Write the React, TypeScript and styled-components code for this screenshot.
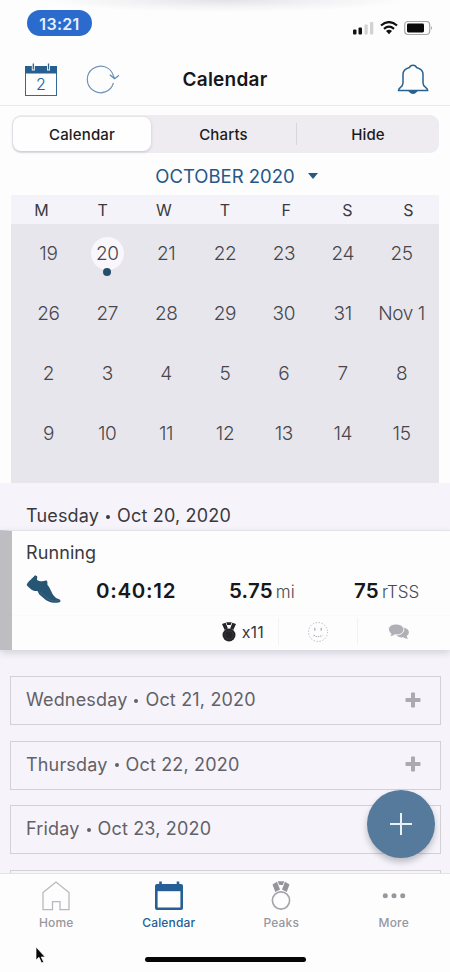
import React from "react";
import styled, { createGlobalStyle } from "styled-components";

const Global = createGlobalStyle`
  * { box-sizing: border-box; }
  body { margin: 0; background: #fdfdfd; overflow: hidden; }
  svg { display: block; flex: none; }
`;

const Screen = styled.div`
  position: relative;
  width: 450px;
  height: 972px;
  display: flex;
  flex-direction: column;
  overflow: hidden;
  background: #fdfdfd;
  color: #2c2b31;
  font-family: Inter, "Liberation Sans", sans-serif;
`;

const StatusBar = styled.header`
  height: 54px;
  flex: none;
  display: flex;
  justify-content: space-between;
  padding: 10px 17px 0 27px;
  background: radial-gradient(ellipse 180px 12px at 50% 0, #e4e2e6 0%, #f4f3f5 60%, #fdfdfd 100%);
`;
const TimePill = styled.div`
  width: 65px;
  height: 26px;
  border-radius: 13px;
  background: #2b6bce;
  color: #e6effc;
  font-size: 16px;
  font-weight: 600;
  letter-spacing: 0.3px;
  line-height: 28px;
  text-align: center;
`;
const StatusIcons = styled.div`
  display: flex;
  gap: 6px;
  padding-top: 11px;
`;

const NavBar = styled.nav`
  height: 52px;
  flex: none;
  display: grid;
  grid-template-columns: 150px 1fr 150px;
  align-items: center;
  border-bottom: 1px solid #ebe8f0;
`;
const NavSide = styled.div<{ $end?: boolean }>`
  display: flex;
  justify-content: ${(p) => (p.$end ? "flex-end" : "flex-start")};
  gap: 27px;
  padding: 0 ${(p) => (p.$end ? "21px" : "0")} 0 ${(p) => (p.$end ? "0" : "24px")};
`;
const Title = styled.h1`
  margin: 0;
  text-align: center;
  color: #17161a;
  font-size: 19px;
  font-weight: 600;
  line-height: 24px;
  letter-spacing: 0.25px;
  white-space: nowrap;
`;

const Segmented = styled.div`
  height: 38px;
  flex: none;
  display: grid;
  grid-template-columns: 138px 145px 1fr;
  align-items: center;
  margin: 9px 11px 0 12px;
  padding: 2px 0 2px 1px;
  border-radius: 9px;
  background: #eeecf0;
`;
const Segment = styled.button<{ $active?: boolean; $divided?: boolean }>`
  height: ${(p) => (p.$active ? "34px" : "22px")};
  padding: 2px 0 0;
  border: 0;
  border-left: ${(p) => (p.$divided ? "1px solid #d8d6dc" : "0")};
  border-radius: ${(p) => (p.$active ? "8px" : "0")};
  background: ${(p) => (p.$active ? "#fefefe" : "transparent")};
  box-shadow: ${(p) => (p.$active ? "0 1px 3px rgba(55, 45, 80, 0.22)" : "none")};
  color: #1c1b20;
  font: 500 15px / 20px Inter, sans-serif;
  letter-spacing: 0.15px;
`;

const MonthRow = styled.div`
  height: 42px;
  flex: none;
  display: flex;
  align-items: center;
  justify-content: center;
  gap: 13px;
  padding: 3px 0 0 23px;
  color: #265887;
  font-size: 18.5px;
`;
const Caret = styled.i`
  border: 5px solid transparent;
  border-top: 6px solid #265887;
  border-bottom: 0;
`;

const Weekdays = styled.div`
  height: 29px;
  flex: none;
  display: grid;
  grid-template-columns: repeat(7, 1fr);
  align-items: center;
  margin: 0 11px;
  background: #f5f3fa;
  color: #3b3a40;
  font-size: 16px;
  text-align: center;
`;
const MonthGrid = styled.div`
  height: 259px;
  flex: none;
  display: grid;
  grid-template-columns: repeat(7, 1fr);
  grid-template-rows: repeat(4, 60px);
  margin: 0 11px;
  padding: 0 8px;
  background: #e7e6ec;
`;
const DayCell = styled.div`
  display: flex;
  flex-direction: column;
  align-items: center;
  padding-top: 13px;
`;
const DayNumber = styled.span<{ $selected?: boolean }>`
  min-width: 33px;
  height: 33px;
  border-radius: 17px;
  background: ${(p) => (p.$selected ? "#f9f7fc" : "transparent")};
  color: #47464d;
  font-size: 19px;
  font-weight: 300;
  line-height: 34px;
  letter-spacing: -0.4px;
  text-align: center;
  white-space: nowrap;
`;
const EventDot = styled.i`
  width: 8px;
  height: 8px;
  margin-top: -2px;
  border-radius: 50%;
  background: #244f6b;
`;

const Agenda = styled.main`
  flex: 1;
  min-height: 0;
  overflow: hidden;
  background: #f6f4fa;
`;
const DateHeading = styled.h2`
  height: 47px;
  margin: 0;
  padding: 20px 26px 0;
  color: #3a393f;
  font-size: 18px;
  font-weight: 400;
  line-height: 26px;
`;
const DateText = styled.span`
  display: flex;
  align-items: center;
  letter-spacing: 0.17px;
  white-space: nowrap;
`;
const Bullet = styled.i`
  width: 4px;
  height: 4px;
  margin: 2px 7px 0;
  border-radius: 50%;
  background: currentColor;
`;
const Workout = styled.article`
  height: 120px;
  border-top: 1px solid #e5e2e9;
  border-left: 12px solid #bebdc1;
  background: #fdfdfd;
  box-shadow: 0 3px 7px rgba(45, 40, 60, 0.17);
`;
const WorkoutName = styled.h3`
  height: 42px;
  margin: 0;
  padding: 9px 14px 0;
  color: #3a393f;
  font-size: 18px;
  font-weight: 400;
  line-height: 25px;
  letter-spacing: 0.1px;
`;
const Metrics = styled.div`
  height: 42px;
  display: grid;
  grid-template-columns: 70px 133px 125px 1fr;
  align-items: start;
  padding-left: 14px;
`;
const MetricIcon = styled.div`
  padding-top: 2px;
`;
const Metric = styled.div<{ $wide?: boolean }>`
  color: #18171b;
  font-size: 20.5px;
  font-weight: 600;
  line-height: 36px;
  letter-spacing: ${(p) => (p.$wide ? "0.7px" : "0.2px")};
  white-space: nowrap;
`;
const Unit = styled.small`
  margin-left: 3px;
  color: #4b4950;
  font-size: 17px;
  font-weight: 300;
  letter-spacing: 0;
`;
const WorkoutFooter = styled.div`
  height: 32px;
  display: grid;
  grid-template-columns: 267px 79px 81px;
  align-items: center;
  border-top: 1px solid #fbf9fb;
`;
const FooterCell = styled.div<{ $end?: boolean; $divided?: boolean }>`
  height: 27px;
  display: flex;
  align-items: center;
  justify-content: ${(p) => (p.$end ? "flex-end" : "center")};
  gap: 6px;
  padding-right: ${(p) => (p.$end ? "14px" : "0")};
  border-right: ${(p) => (p.$divided ? "1px solid #f4f0f6" : "0")};
  color: #39383e;
  font-size: 16px;
  letter-spacing: 0.2px;
`;

const DayList = styled.div`
  display: flex;
  flex-direction: column;
  gap: 15.5px;
  padding: 26px 9px 0 10px;
`;
const EmptyDay = styled.section`
  height: 49px;
  flex: none;
  display: flex;
  align-items: center;
  justify-content: space-between;
  padding: 0 19px 2px 15px;
  border: 1px solid #d3d1d5;
  color: #626168;
  font-size: 18px;
`;

const TabBar = styled.nav`
  height: 99px;
  flex: none;
  display: grid;
  grid-template-columns: repeat(4, 1fr);
  padding-top: 6px;
  border-top: 1px solid #e4e1e8;
  background: #fdfdfd;
`;
const Tab = styled.div<{ $active?: boolean }>`
  display: flex;
  flex-direction: column;
  align-items: center;
  gap: 3px;
  color: ${(p) => (p.$active ? "#265f97" : "#98979f")};
  font-size: 12px;
  font-weight: 500;
  line-height: 16px;
  letter-spacing: 0.15px;
`;
const AddButton = styled.button`
  position: absolute;
  left: 367px;
  top: 790px;
  width: 68px;
  height: 68px;
  display: grid;
  place-items: center;
  padding: 0;
  border: 0;
  border-radius: 50%;
  background: #557a9c;
  box-shadow: 0 4px 6px rgba(40, 40, 50, 0.28);
`;
const HomeIndicator = styled.div`
  position: absolute;
  left: 145px;
  top: 957px;
  width: 161px;
  height: 5px;
  border-radius: 3px;
  background: #060606;
`;
const Pointer = styled.svg`
  position: absolute;
  left: 35px;
  top: 946px;
`;

const Signal = () => (
  <svg width="21" height="14" viewBox="0 0 21 14">
    <rect x="0" y="8.5" width="3.5" height="5" rx="1" fill="#111" />
    <rect x="5.5" y="6.5" width="3.5" height="7" rx="1" fill="#111" />
    <rect x="11.5" y="3.5" width="3.2" height="10" rx="1" fill="#d2d1d5" />
    <rect x="17" y="1" width="3.3" height="12.5" rx="1" fill="#d2d1d5" />
  </svg>
);
const Wifi = () => (
  <svg width="18" height="14" viewBox="0 0 18 14">
    <g fill="none" stroke="#111" strokeWidth="2.2">
      <path d="M1 4.5Q9-2.3 17 4.5M4 7.8Q9 3.5 14 7.8" />
    </g>
    <path d="M6 10Q9 7.5 12 10L9 13.2Z" fill="#111" />
  </svg>
);
const Battery = () => (
  <svg width="29" height="15" viewBox="0 0 29 15">
    <rect x=".7" y=".5" width="25" height="13" rx="3.5" fill="none" stroke="#aaa8ac" strokeWidth="1.2" />
    <rect x="3" y="2.5" width="17" height="9" rx="1.4" fill="#0b0b0b" />
    <path d="M27 5q1.8 2 0 4z" fill="#88868b" />
  </svg>
);
const TodayIcon = () => (
  <svg width="34" height="34" viewBox="0 0 34 34">
    <rect x="1.5" y="4" width="31" height="28.5" fill="#fefefe" stroke="#326998" />
    <path d="M1 3h32v7.5H1z" fill="#265f90" />
    <path d="M9.3.5v7M24.5.5v7" stroke="#fdfdfd" strokeWidth="3" />
    <path d="M9.3.5v6M24.5.5v6" stroke="#355f83" strokeWidth="1.3" />
    <text x="16.8" y="27" textAnchor="middle" fontFamily="Inter" fontSize="16" fontWeight="300" fill="#285f8f">2</text>
  </svg>
);
const RefreshIcon = () => (
  <svg width="34" height="34" viewBox="0 0 34 34" fill="none" stroke="#7195b5" strokeWidth="1.2">
    <path d="M28.4 20A13.3 13.3 0 1 1 28.3 12.5L29.4 15.5" />
    <path d="M24.8 11.8l4.8 4 4.6-3.7" stroke="#5987ae" />
  </svg>
);
const Bell = () => (
  <svg width="32" height="32" viewBox="0 0 32 32" fill="none" stroke="#286291" strokeWidth="1.5">
    <path d="M1.5 26.5C1.5 23 6 23.5 6 19v-8.5c0-4 2.5-6 6.5-7C13.2.4 18.8.4 19.5 3.5 23.5 4.5 26 6.5 26 10.5V19c0 4.5 4.7 4 4.7 7.5z" />
    <path d="M12.5 27.3q3.5 4 7 0z" fill="#286291" />
  </svg>
);
const Shoe = () => (
  <svg width="35" height="30" viewBox="0 0 35 30">
    <path d="M.7 10.3C1 7.3 5 4.9 9 .3l2.2 1-.2 3.8c2.9 1.8 6.6 1.5 9.2.2l1.1 1.2.2 3.6c3.7 4.1 4 9.3 8 12.3 2.6 2 5.2 1.5 5 3.8-.7 1.5-4.9 2-8.8 1.2-5-1-8.2-4.6-12.4-8l-1.8-3.4c-5.5.6-7.3-2.5-10.8-5.7z" fill="#275674" />
    <path d="M14 17.5c3.5 1.5 6 5.5 10 7.4 2.7 1.3 6.5 1.3 9.7.6" fill="none" stroke="#46718a" strokeWidth=".6" />
  </svg>
);
const MedalSmall = () => (
  <svg width="14" height="20" viewBox="0 0 14 20">
    <circle cx="7" cy="13" r="6.5" fill="#252429" />
    <path d="M0 2.1L3.6.8l2.3 5.6-3.2 1.5zM14 2.1L10.4.8 8.1 6.4l3.2 1.5zM4.2.2h5.6L8.6 3H5.3z" fill="#252429" />
    <circle cx="7" cy="13" r="4.1" fill="none" stroke="#444248" strokeWidth=".6" />
  </svg>
);
const Smile = () => (
  <svg width="22" height="22" viewBox="0 0 22 22" fill="none" stroke="#b3b0bb">
    <circle cx="11" cy="11" r="9.5" strokeDasharray="1.2 1.8" />
    <path d="M7.8 6.7v3M14.2 6.7v3" strokeWidth="1.3" />
    <path d="M6.5 14q4.5 3.2 9 0" strokeWidth="1.1" strokeDasharray="1.5 .8" />
  </svg>
);
const Chat = () => (
  <svg width="21" height="17" viewBox="0 0 21 17">
    <path d="M15 4.5c7 1 7 6.3 3.8 8.2.1 1.4.6 2.1 1.2 3-1.9.2-3.5-.3-4.7-1.4-3 .4-5.8-.4-7-2.3" fill="#b1b0b6" />
    <path d="M8 1c4.5 0 7.8 2.3 7.8 5.6 0 3.6-4.2 6-9 5.2-1.2 1-3 1.8-5.2 1.7 1-.9 1.3-1.9 1.3-2.8C-2.2 6.4 1.2 1 8 1z" fill="#b1b0b6" stroke="#fdfdfd" strokeWidth="1" />
  </svg>
);
const SmallPlus = () => (
  <svg width="16" height="16" viewBox="0 0 16 16">
    <path d="M6.8.5h2.4q.8 0 .8.8V6h4.7q.8 0 .8.8v2.4q0 .8-.8.8H10v4.7q0 .8-.8.8H6.8q-.8 0-.8-.8V10H1.3q-.8 0-.8-.8V6.8q0-.8.8-.8H6V1.3q0-.8.8-.8z" fill="#abaab0" />
  </svg>
);
const HomeIcon = () => (
  <svg width="30" height="32" viewBox="0 0 30 32" fill="none" stroke="#b8b7be" strokeWidth="1.25">
    <path d="M2 12.5L15 2l13 10.5v17h-9v-8h-7.5v8H2z" />
  </svg>
);
const CalendarIcon = () => (
  <svg width="30" height="32" viewBox="0 0 30 32">
    <path d="M3 4h24q2 0 2 2v22q0 2-2 2H3q-2 0-2-2V6q0-2 2-2z" fill="#265f96" />
    <path d="M3.6 11.2h22.8v16.3H3.6z" fill="#fefefe" />
    <path d="M6.5 1.5v5M24 1.5v5" stroke="#265f96" strokeWidth="2.6" />
  </svg>
);
const PeaksIcon = () => (
  <svg width="30" height="32" viewBox="0 0 30 32">
    <circle cx="15" cy="20.5" r="8.6" fill="none" stroke="#a5a3ab" strokeWidth="1.6" />
    <path d="M6.5 4.5L11 1.8l3 7.7-4.7 2.5zM23.5 4.5L19 1.8l-3 7.7 4.7 2.5zM11.7 1.2h6.6L16.8 5h-3.5z" fill="#96949b" />
  </svg>
);
const MoreIcon = () => (
  <svg width="30" height="32" viewBox="0 0 30 32" fill="#98979f">
    <circle cx="6.3" cy="15.8" r="2.5" /><circle cx="15" cy="15.8" r="2.5" /><circle cx="23.7" cy="15.8" r="2.5" />
  </svg>
);

const dates = ["19", "20", "21", "22", "23", "24", "25", "26", "27", "28", "29", "30", "31", "Nov 1", "2", "3", "4", "5", "6", "7", "8", "9", "10", "11", "12", "13", "14", "15"];
const upcoming = [
  { day: "Wednesday", date: "Oct 21, 2020" },
  { day: "Thursday", date: "Oct 22, 2020" },
  { day: "Friday", date: "Oct 23, 2020" },
];
const tabs = [
  { label: "Home", Icon: HomeIcon },
  { label: "Calendar", Icon: CalendarIcon },
  { label: "Peaks", Icon: PeaksIcon },
  { label: "More", Icon: MoreIcon },
];

const DateLabel = ({ day, date }: { day: string; date: string }) => (
  <DateText>{day}<Bullet />{date}</DateText>
);

export default function App() {
  return (
    <>
      <Global />
      <Screen>
        <StatusBar>
          <TimePill>13:21</TimePill>
          <StatusIcons><Signal /><Wifi /><Battery /></StatusIcons>
        </StatusBar>
        <NavBar>
          <NavSide><TodayIcon /><RefreshIcon /></NavSide>
          <Title>Calendar</Title>
          <NavSide $end><Bell /></NavSide>
        </NavBar>
        <Segmented>
          <Segment $active>Calendar</Segment>
          <Segment>Charts</Segment>
          <Segment $divided>Hide</Segment>
        </Segmented>
        <MonthRow>OCTOBER 2020<Caret /></MonthRow>
        <Weekdays>{["M", "T", "W", "T", "F", "S", "S"].map((d, i) => <span key={i}>{d}</span>)}</Weekdays>
        <MonthGrid>
          {dates.map((date) => (
            <DayCell key={date}>
              <DayNumber $selected={date === "20"}>{date}</DayNumber>
              {date === "20" && <EventDot />}
            </DayCell>
          ))}
        </MonthGrid>
        <Agenda>
          <DateHeading><DateLabel day="Tuesday" date="Oct 20, 2020" /></DateHeading>
          <Workout>
            <WorkoutName>Running</WorkoutName>
            <Metrics>
              <MetricIcon><Shoe /></MetricIcon>
              <Metric $wide>0:40:12</Metric>
              <Metric>5.75<Unit>mi</Unit></Metric>
              <Metric>75<Unit>rTSS</Unit></Metric>
            </Metrics>
            <WorkoutFooter>
              <FooterCell $end $divided><MedalSmall />x11</FooterCell>
              <FooterCell $divided><Smile /></FooterCell>
              <FooterCell><Chat /></FooterCell>
            </WorkoutFooter>
          </Workout>
          <DayList>
            {upcoming.map((entry) => (
              <EmptyDay key={entry.day}><DateLabel {...entry} /><SmallPlus /></EmptyDay>
            ))}
            <EmptyDay />
          </DayList>
        </Agenda>
        <TabBar>
          {tabs.map(({ label, Icon }) => <Tab key={label} $active={label === "Calendar"}><Icon />{label}</Tab>)}
        </TabBar>
        <AddButton aria-label="Add workout">
          <svg width="24" height="24" viewBox="0 0 24 24"><path d="M12 1v22M1 12h22" stroke="#e8f1f8" strokeWidth="2" /></svg>
        </AddButton>
        <HomeIndicator />
        <Pointer width="11" height="18" viewBox="0 0 11 18">
          <path d="M1 1v13l3-2.7L6.5 17l2.2-1-2.5-5h4z" fill="#080808" stroke="#fff" strokeWidth=".7" />
        </Pointer>
      </Screen>
    </>
  );
}
